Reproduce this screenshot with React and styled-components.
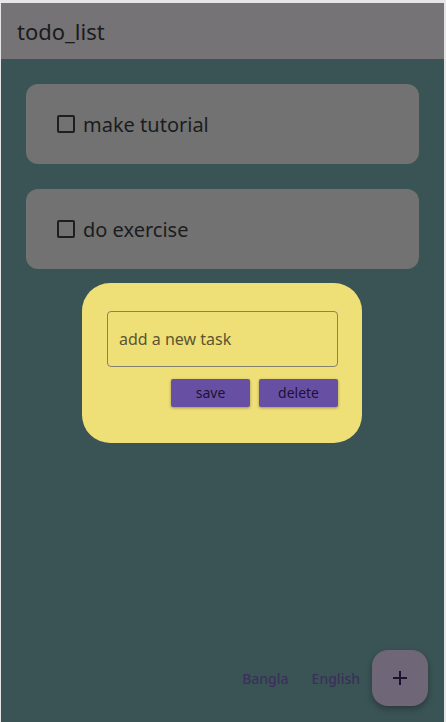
import React from "react";
import styled, { createGlobalStyle } from "styled-components";

const Global = createGlobalStyle`
  html, body { margin: 0; padding: 0; }
  body { background: #ececec; font-family: "Noto Sans", "Open Sans", sans-serif; }
  * { box-sizing: border-box; }
`;

const Frame = styled.div`
  width: 446px;
  height: 722px;
  padding: 3px 2px 0 1px;
  background: #e6e6e6;
`;

const Screen = styled.div`
  position: relative;
  width: 100%;
  height: 100%;
  display: flex;
  flex-direction: column;
  background: #3a5354;
  overflow: hidden;
`;

const AppBar = styled.header`
  height: 56px;
  flex: none;
  display: flex;
  align-items: center;
  padding: 0 16px;
  background: #757375;
`;

const Title = styled.h1`
  margin: 0;
  font-size: 22px;
  font-weight: 400;
  color: #1b1b1b;
`;

const Body = styled.main`
  flex: 1;
  display: flex;
  flex-direction: column;
  gap: 25px;
  padding: 25px;
`;

const Card = styled.div`
  height: 80px;
  border-radius: 12px;
  background: #727272;
  display: flex;
  align-items: center;
  padding-left: 31px;
  gap: 8px;
`;

const Box = styled.span`
  width: 18px;
  height: 18px;
  border: 2px solid #1e1e1e;
  border-radius: 2px;
  flex: none;
`;

const TaskText = styled.span`
  font-size: 20px;
  color: #1c1c1c;
`;

const Overlay = styled.div`
  position: absolute;
  inset: 0;
  padding-right: 1px;
  display: flex;
  align-items: center;
  justify-content: center;
`;

const Dialog = styled.div`
  width: 280px;
  height: 160px;
  border-radius: 28px;
  background: #efdf77;
  padding: 28px 24px 0 25px;
  display: flex;
  flex-direction: column;
  gap: 12px;
`;

const Input = styled.div`
  height: 56px;
  border: 1px solid #858070;
  border-radius: 4px;
  display: flex;
  align-items: center;
  padding-left: 11px;
  font-size: 16px;
  color: #5b5532;
`;

const Actions = styled.div`
  display: flex;
  justify-content: flex-end;
  gap: 9px;
`;

const Button = styled.button`
  width: 79px;
  height: 28px;
  border: none;
  border-radius: 2px;
  background: #6750a4;
  color: #1d1230;
  font-family: inherit;
  font-size: 14px;
  padding: 0;
  box-shadow: 0 1px 3px rgba(0, 0, 0, 0.35);
`;

const Bottom = styled.div`
  position: absolute;
  right: 16px;
  bottom: 16px;
  display: flex;
  align-items: center;
`;

const TextButton = styled.span`
  font-size: 14px;
  font-weight: 500;
  color: #3b2f5c;
  margin-right: ${(p) => p.$mr}px;
`;

const Fab = styled.div`
  width: 56px;
  height: 56px;
  border-radius: 16px;
  background: #6f6677;
  display: flex;
  align-items: center;
  justify-content: center;
  box-shadow: 0 3px 6px rgba(0, 0, 0, 0.3);
`;

export default function App() {
  return (
    <>
      <Global />
      <Frame>
        <Screen>
          <AppBar>
            <Title>todo_list</Title>
          </AppBar>
          <Body>
            <Card>
              <Box />
              <TaskText>make tutorial</TaskText>
            </Card>
            <Card>
              <Box />
              <TaskText>do exercise</TaskText>
            </Card>
          </Body>
          <Bottom>
            <TextButton $mr={23}>Bangla</TextButton>
            <TextButton $mr={12}>English</TextButton>
            <Fab>
              <svg width="16" height="16" viewBox="0 0 16 16">
                <path d="M8 1v14M1 8h14" stroke="#1d1230" strokeWidth="2" />
              </svg>
            </Fab>
          </Bottom>
          <Overlay>
            <Dialog>
              <Input>add a new task</Input>
              <Actions>
                <Button>save</Button>
                <Button>delete</Button>
              </Actions>
            </Dialog>
          </Overlay>
        </Screen>
      </Frame>
    </>
  );
}
